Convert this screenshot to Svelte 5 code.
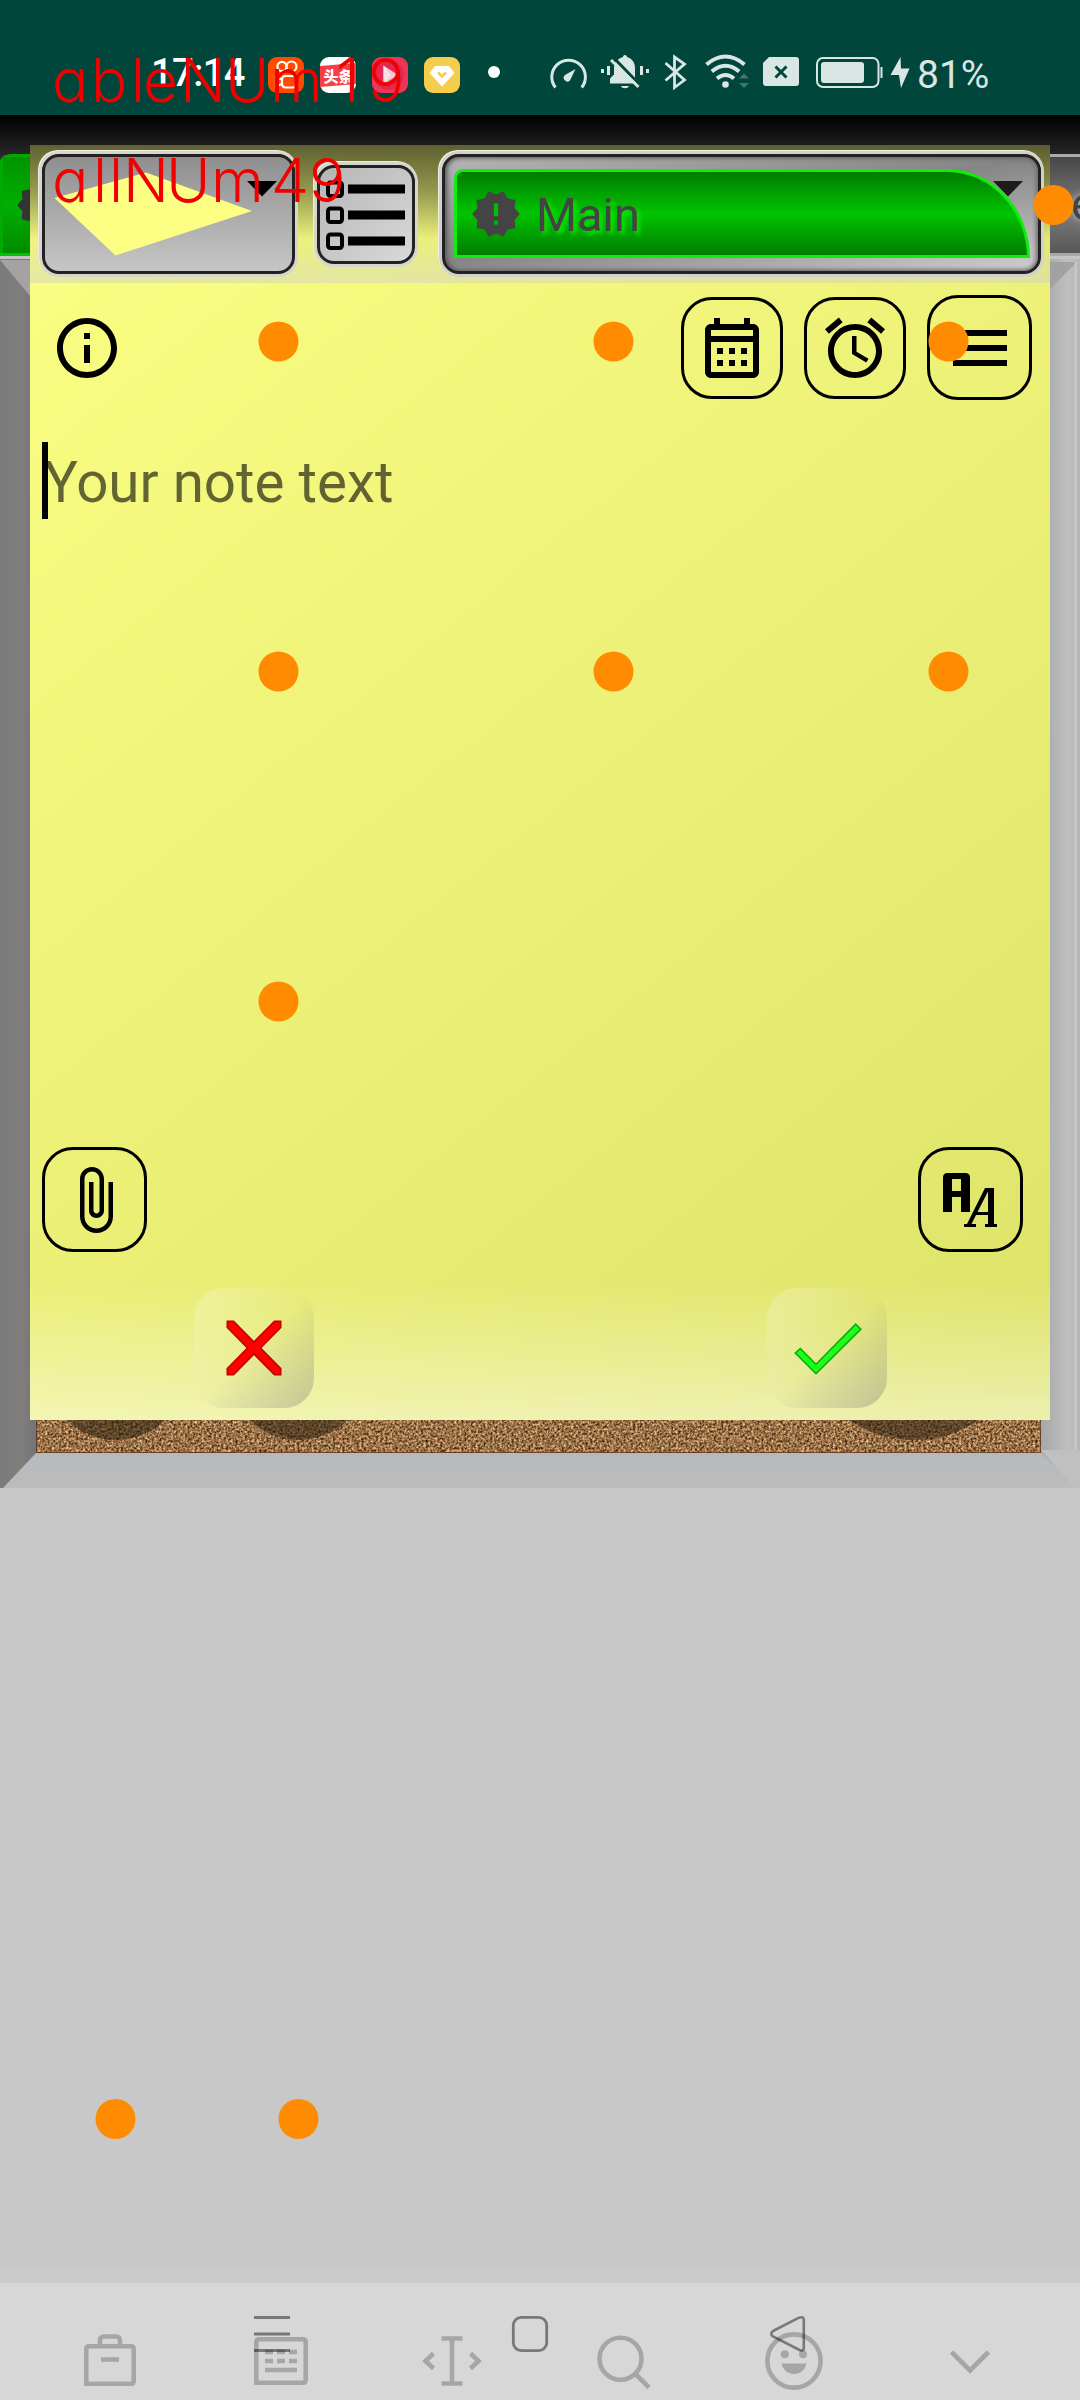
<script>
  const touches = [
    [1053.5, 205], [278.5, 341.5], [613.5, 341.5], [948.5, 341.5],
    [278.5, 671.5], [613.5, 671.5], [948.5, 671.5], [278.5, 1001.5],
    [115.5, 2119], [298.5, 2119]
  ];
  const listRows = [16.5, 42.5, 68.5];
  const badge =
    'M23 12l-2.44-2.78.34-3.68-3.61-.82-1.89-3.18L12 3 8.6 1.54 6.71 4.72l-3.61.81.34 3.68L1 12l2.44 2.78-.34 3.69 3.61.82 1.89 3.18L12 21l3.4 1.46 1.89-3.18 3.61-.82-.34-3.68L23 12zm-10 5h-2v-2h2v2zm0-4h-2V7h2v6z';
</script>

<div class="screen">
  <header class="status">
    <span class="clock">17:14</span>
    <div class="apps">
      <svg width="36" height="36" viewBox="0 0 36 36">
        <rect width="36" height="36" rx="9" fill="#ff4a00" />
        <g fill="none" stroke="#fff" stroke-width="2.2">
          <circle cx="14" cy="9.500" r="4.600" /><circle cx="23.5" cy="9.500" r="5" />
          <rect x="14" y="19" width="14.500" height="11.5" rx="3.5" />
          <path d="M14 22.500L8 20V29L14 27" />
        </g>
      </svg>
      <svg width="36" height="36" viewBox="0 0 36 36">
        <rect width="36" height="36" rx="9" fill="#fff" />
        <path d="M0 9L36 6V27L0 30Z" fill="#f83d44" />
        <text class="cjk" x="3.500" y="24.500" fill="#fff">头条</text>
      </svg>
      <svg width="36" height="36" viewBox="0 0 36 36">
        <rect width="36" height="36" rx="9" fill="#ee3558" />
        <circle cx="17" cy="18" r="15" fill="#dc1f49" opacity=".6" />
        <path d="M11.5 8.5L26 18 11.5 27.5Z" fill="#f9c3cc" />
        <path d="M11.5 8.5L19 18 11.5 27.5Z" fill="#f6e2e4" />
      </svg>
      <svg width="36" height="36" viewBox="0 0 36 36">
        <rect width="36" height="36" rx="9" fill="#f5cd4d" />
        <path d="M11 9.500H25L30 16 18 29 6 16Z" fill="#fff" stroke="#fff" stroke-width="1" stroke-linejoin="round" />
        <path d="M14 15.500L18 19.500 22 15.500" fill="none" stroke="#f5cd4d" stroke-width="2.600" />
      </svg>
    </div>
    <span class="more"></span>
    <svg class="signals" width="362" height="40" viewBox="548 53 362 40" fill="#d9e6e4">
      <g fill="none" stroke="#d9e6e4" stroke-width="3">
        <path d="M555.500 87.500A16.800 16.800 0 1 1 581.700 87.500" />
      </g>
      <path d="M575.500 69L570 80.500A3.500 3.500 0 1 1 565 75Z" />
      <path d="M625 55c1.500 0 2 1 2 2 5 1.500 8 5.500 8 11v10l5 5.500H610v-5l4-4V68c0-5.500 4-9.500 9-11 0-1 .5-2 2-2zM621 86h8c-1 3-7 3-8 0z" />
      <path d="M612 56L642 87" stroke="#00463a" stroke-width="3" />
      <path d="M611 60L638.500 87" stroke="#d9e6e4" stroke-width="3" />
      <path d="M601 69h3v4h-3zM607 66h3v9h-3zM640 66h3v9h-3zM646 69h3v4h-3z" />
      <path d="M665.500 63L684.500 80 674.500 87.500V57L684.500 64 665.500 80.500" fill="none" stroke="#d9e6e4" stroke-width="2.800" />
      <g fill="none" stroke="#d9e6e4" stroke-width="4">
        <path d="M706.500 64.500Q725.500 48.500 744.500 64.500" />
        <path d="M711.800 71.500Q725.500 60 739.200 71.500" />
        <path d="M717 78.500Q725.500 71.500 734 78.500" />
      </g>
      <circle cx="725.500" cy="84.500" r="3.300" />
      <path d="M744 73.500l5 5h-10zM744 88l-5-5h10z" opacity=".3" />
      <path d="M769 57h27q3 0 3 3v23q0 3-3 3h-30q-3 0-3-3V63z" />
      <path d="M775.500 66.500l11 11M786.500 66.500l-11 11" stroke="#00463a" stroke-width="3" />
      <rect x="817" y="58" width="61.500" height="29" rx="6" fill="none" stroke="#d9e6e4" stroke-width="2" />
      <rect x="821" y="62" width="43" height="21" rx="3" />
      <path d="M880.500 67h2v11h-2z" />
      <path d="M900.500 57L890.500 75H899L901 88 909.500 68.500H901Z" />
    </svg>
    <span class="percent">81%</span>
  </header>

  <main class="board">
    <svg class="backdrop" width="1080" height="1373" viewBox="0 115 1080 1373">
      <defs>
        <linearGradient id="strip" x2="0" y2="1">
          <stop offset="0" stop-color="#000" /><stop offset=".3" stop-color="#292929" /><stop offset="1" stop-color="#666" />
        </linearGradient>
        <linearGradient id="tab" x2="0" y2="1">
          <stop offset="0" stop-color="#009400" /><stop offset=".5" stop-color="#00ae00" /><stop offset="1" stop-color="#008a00" />
        </linearGradient>
        <linearGradient id="grayTab" x2="0" y2="1">
          <stop offset="0" stop-color="#474747" /><stop offset=".55" stop-color="#7c7c7c" /><stop offset="1" stop-color="#585858" />
        </linearGradient>
        <linearGradient id="railL"><stop offset="0" stop-color="#7b7b7b" /><stop offset=".6" stop-color="#807e7d" /><stop offset="1" stop-color="#737478" /></linearGradient>
        <linearGradient id="railR"><stop offset="0" stop-color="#a6a7a8" /><stop offset=".7" stop-color="#bfbfc0" /><stop offset="1" stop-color="#b6b6b6" /></linearGradient>
        <linearGradient id="railB" x2="0" y2="1"><stop offset="0" stop-color="#bab8b8" /><stop offset=".25" stop-color="#b7bcc2" /><stop offset=".5" stop-color="#bababa" /><stop offset="1" stop-color="#bcbcbc" /></linearGradient>
        <filter id="grain" x="0" y="0" width="1" height="1" color-interpolation-filters="sRGB">
          <feTurbulence type="fractalNoise" baseFrequency=".42" numOctaves="3" seed="4" />
          <feColorMatrix values="1.200 0 0 0 0  1.050 0 0 0 -.08  .85 0 0 0 -.14  0 0 0 0 1" />
        </filter>
        <clipPath id="corkClip"><rect x="36" y="1400" width="1005" height="53" /></clipPath>
      </defs>
      <rect y="115" width="1080" height="141" fill="url(#strip)" />
      <path d="M-2 256V170Q-2 154 12 154H40V256Z" fill="#0a0" />
      <rect x="3" y="157" width="40" height="97" fill="url(#tab)" />
      <rect y="253" width="40" height="3" fill="#00c400" />
      <path d={badge} fill="#333" transform="translate(15 179) scale(2.180)" />
      <rect x="1040" y="154" width="40" height="102" fill="#a9a9a9" />
      <rect x="1040" y="157" width="40" height="96" fill="url(#grayTab)" />
      <text class="tabText" x="1071" y="220">e</text>
      <rect y="256" width="1080" height="1232" fill="#b9b9b9" />
      <rect y="256" width="36" height="1232" fill="url(#railL)" />
      <path d="M0 260H36V303Z" fill="#a4a3a2" />
      <rect x="1041" y="256" width="39" height="1232" fill="url(#railR)" />
      <path d="M1041 262H1077L1041 298Z" fill="#a2a2a2" />
      <rect y="256" width="1080" height="3" fill="#c4c4c4" />
      <rect x="1074.500" y="262" width="2.500" height="1223" fill="#c8c8c8" />
      <path d="M36 1453H1041L1075 1488H3Z" fill="url(#railB)" />
      <path d="M1041 1450H1080V1488H1075Z" fill="#c0c0c0" />
      <rect x="36" y="1400" width="1005" height="53" fill="#986b45" />
      <rect x="36" y="1400" width="1005" height="53" filter="url(#grain)" />
      <g clip-path="url(#corkClip)" fill="#2b2110" opacity=".55">
        <circle cx="116" cy="1370" r="70" /><circle cx="299" cy="1370" r="70" /><circle cx="914" cy="1324" r="116" />
      </g>
      <path d="M36.500 1400V1452.500H1040.500V1400" fill="none" stroke="#55341b" opacity=".7" />
    </svg>

    <section class="note">
      <div class="toolbar">
        <div class="frame color">
          <svg width="247" height="114" viewBox="45 157 247 114">
            <path d="M54.500 198L146 172.500 252 211 115.500 255.500Z" fill="#fcff84" />
            <path d="M247 181h30l-15 15.500z" />
          </svg>
        </div>
        <div class="frame list">
          <svg width="92" height="93" viewBox="0 0 92 93">
            {#each listRows as y}
              <rect x="8" y={y - 2} width="14" height="13.500" rx="2.500" fill="none" stroke="#000" stroke-width="4" />
              <rect x="28" {y} width="57" height="9" />
            {/each}
          </svg>
        </div>
        <div class="frame folder">
          <svg class="caret" width="30" height="16" viewBox="0 0 30 16"><path d="M0 0h30L15 15.500z" fill="#1c1c1c" /></svg>
          <div class="tab">
            <svg width="52" height="52" viewBox="0 0 24 24" fill="#444"><path d={badge} /></svg>
            <span>Main</span>
          </div>
        </div>
      </div>

      <div class="actions">
        <svg class="info" width="72" height="72" viewBox="0 0 24 24"><path d="M11 7h2v2h-2zm0 4h2v6h-2zm1-9C6.480 2 2 6.480 2 12s4.480 10 10 10 10-4.480 10-10S17.520 2 12 2zm0 18c-4.410 0-8-3.590-8-8s3.590-8 8-8 8 3.590 8 8-3.590 8-8 8z" /></svg>
        <div class="key">
          <svg width="72" height="72" viewBox="0 0 24 24"><path d="M19 4h-1V2h-2v2H8V2H6v2H5c-1.110 0-1.990.9-1.990 2L3 20c0 1.100.89 2 2 2h14c1.100 0 2-.9 2-2V6c0-1.100-.9-2-2-2zm0 16H5V10h14v10zm0-12H5V6h14v2zM9 14H7v-2h2v2zm4 0h-2v-2h2v2zm4 0h-2v-2h2v2zm-8 4H7v-2h2v2zm4 0h-2v-2h2v2zm4 0h-2v-2h2v2z" /></svg>
        </div>
        <div class="key">
          <svg width="72" height="72" viewBox="0 0 24 24"><path d="M22 5.720l-4.600-3.860-1.290 1.530 4.600 3.860L22 5.720zM7.880 3.390L6.600 1.860 2 5.710l1.290 1.530 4.590-3.850zM12.500 8H11v6l4.750 2.850.75-1.230-4-2.370V8zM12 4c-4.970 0-9 4.030-9 9s4.020 9 9 9c4.970 0 9-4.030 9-9s-4.030-9-9-9zm0 16c-3.870 0-7-3.130-7-7s3.130-7 7-7 7 3.130 7 7-3.130 7-7 7z" /></svg>
        </div>
        <div class="key big">
          <svg width="72" height="72" viewBox="0 0 24 24"><path d="M3 6h18v2H3zM3 11h18v2H3zM3 16h18v2H3z" /></svg>
        </div>
      </div>

      <div class="editor"><i></i><span>Your note text</span></div>

      <div class="extras">
        <div class="key big">
          <svg width="72" height="72" viewBox="0 0 24 24"><path d="M16.500 6v11.500c0 2.210-1.790 4-4 4s-4-1.790-4-4V5c0-1.380 1.120-2.500 2.500-2.500s2.500 1.120 2.500 2.500v10.500c0 .55-.45 1-1 1s-1-.45-1-1V6H10v9.500c0 1.380 1.120 2.500 2.500 2.500s2.500-1.120 2.500-2.500V5c0-2.210-1.790-4-4-4S7 2.790 7 5v12.500c0 3.040 2.460 5.500 5.500 5.500s5.500-2.460 5.500-5.500V6h-1.500z" /></svg>
        </div>
        <div class="key big">
          <svg class="style" width="54" height="54" viewBox="0 0 18 18"><path d="M1.500 0H7.500Q9 0 9 1.500V13H6V8H3V13H0V1.500Q0 0 1.500 0ZM3 2V6H6V2ZM14 5H17V17H18V18H14V17H15V14H11L9.500 17H11V18H7V17H8ZM15 6.200L11.500 13H15Z" fill-rule="evenodd" /></svg>
        </div>
      </div>

      <div class="confirm">
        <div class="soft">
          <svg width="120" height="120" viewBox="194 1288 120 120"><path d="M227.300 1321.300H233.500L254 1342 274.500 1321.300H280.700V1327.500L260.500 1348 280.700 1368.500V1374.700H274.500L254 1354 233.500 1374.700H227.300V1368.500L247.500 1348 227.300 1327.500Z" fill="#f00" stroke="#c00000" stroke-width="1.600" /></svg>
        </div>
        <div class="soft">
          <svg width="120" height="120" viewBox="767 1288 120 120"><path d="M795.300 1353L800.300 1348.500 816 1364.200 855.700 1324.200 860.800 1329.300 816 1373.700Z" fill="#1bff1b" stroke="#0bab0b" stroke-width="1.600" /></svg>
        </div>
      </div>
    </section>
  </main>

  <div class="space"></div>
  <div class="edge"></div>
  <footer class="keyboard">
    <svg width="1080" height="117" viewBox="0 2283 1080 117" fill="none" stroke="#a5a7a5" stroke-width="4.600">
      <path d="M86.300 2383.700V2349Q86.300 2346.300 89 2346.300H131Q133.700 2346.300 133.700 2349V2381Q133.700 2383.700 131 2383.700ZM100 2346V2341Q100 2336.500 104 2336.500H116Q120 2336.500 120 2341V2346M101 2359.500H119" />
      <path d="M256.300 2382.700V2342Q256.300 2339.300 259 2339.300H303Q305.700 2339.300 305.700 2342V2380Q305.700 2382.700 303 2382.700ZM265 2352H273M277 2352H285M289 2352H297M265 2361H273M277 2361H285M289 2361H297M265 2370H297" />
      <path d="M441.500 2338.500H462.500M441.500 2383.500H462.500M452 2338V2384M433.500 2353.500L425.500 2361 433.500 2368.500M470.500 2353.500L478.500 2361 470.500 2368.500" />
      <circle cx="620.500" cy="2358.700" r="21" /><path d="M635 2373.500L649 2387.500" />
      <circle cx="794" cy="2361" r="26.600" />
      <g fill="#a5a7a5" stroke="none"><circle cx="784.800" cy="2354.300" r="4" /><circle cx="803" cy="2354.300" r="4" /><path d="M781.500 2363.500H806.500C805 2370 800 2374 794 2374S783 2370 781.500 2363.500Z" /></g>
      <path d="M951.500 2352L970 2370.500 988.500 2352" />
    </svg>
    <svg class="nav" width="1080" height="117" viewBox="0 2283 1080 117" fill="none" stroke="#000" stroke-opacity=".44" stroke-width="2.800">
      <path d="M254 2317.500H290M254 2334H290M254 2350.500H290" />
      <rect x="513.300" y="2317.300" width="33.400" height="33.400" rx="8" />
      <path d="M773 2331L799 2317.700Q803.800 2316 803.800 2320V2348Q803.800 2351.500 799.500 2350L773 2336.500Q769.500 2334 773 2331Z" stroke-width="2.600" />
    </svg>
  </footer>

  <svg class="overlay" width="1080" height="2400" viewBox="0 0 1080 2400">
    {#each touches as [x, y]}
      <circle cx={x} cy={y} r="20" fill="#ff8c00" />
    {/each}
    <text class="trace" x="52 91 131 143 180 225 270 336 368" y="102">ableNUm19</text>
    <text class="trace" x="52 93 109 123 166 211 271 309" y="202">allNUm49</text>
  </svg>
</div>

<style>
  :global(body) { margin: 0; background: #c8c8c8; }
  .screen { position: relative; width: 1080px; height: 2400px; overflow: hidden; display: flex; flex-direction: column; font-family: Roboto, "Liberation Sans", sans-serif; }
  svg { display: block; flex: none; }
  .status { height: 115px; box-sizing: border-box; padding: 53px 0 0 151px; background: #00463a; display: flex; align-items: flex-start; color: #fff; }
  .clock { width: 117px; font-size: 38px; line-height: 40px; font-weight: 500; letter-spacing: -0.5px; }
  .apps { display: flex; gap: 16px; padding-top: 4px; }
  .cjk { font: 900 15px "Noto Sans CJK SC", sans-serif; }
  .more { width: 12px; height: 12px; border-radius: 50%; background: #fff; margin: 13px 48px 0 28px; }
  .percent { color: #d9e6e4; font-size: 39px; line-height: 44px; margin-left: 7px; }
  .board { position: relative; height: 1373px; }
  .tabText { font-size: 47px; fill: #444; filter: drop-shadow(0 0 4px #ccc); }
  .note { position: absolute; left: 30px; top: 30px; width: 1020px; height: 1275px; display: flex; flex-direction: column; background: linear-gradient(141deg, #fbff84 0%, #dde269 100%); }
  .toolbar { height: 138px; box-sizing: border-box; padding: 6px 6px 0 9px; display: flex; background: linear-gradient(rgba(0,0,0,.62), rgba(0,0,0,.38) 35%, rgba(120,120,80,.08) 68%, rgba(205,205,205,.45)); }
  .frame { box-sizing: border-box; border: 3px solid #222; border-radius: 17px; box-shadow: 0 0 0 3px #d6d6cd, -1px -1px 0 3px #eeeee4; background: linear-gradient(#8f8f8f, #c6c6c6); flex: none; }
  .color { width: 253px; height: 120px; margin: 3px 22px 0 3px; }
  .list { width: 98px; height: 99px; margin: 14px 27px 0 0; border-color: #222; background: linear-gradient(135deg, #b5b5b5, #d9d9d9); }
  .folder { position: relative; width: 599px; height: 120px; margin-top: 3px; padding: 12px 0 0 9px; background: linear-gradient(170deg, #b5b5b5, #858585 48%, #cfcfcf); box-shadow: 0 0 0 3px #d2d2cc, -1px -1px 0 3px #eeeee4, inset 2px 0 5px #555, inset -2px 0 5px #777; }
  .caret { position: absolute; right: 15px; top: 24px; }
  .tab { position: relative; width: 576px; height: 89px; box-sizing: border-box; border: 3px solid #10ec10; border-radius: 9px 83px 0 0 / 9px 89px 0 0; background: linear-gradient(#007d00, #00c400 50%, #007d00); display: flex; align-items: center; padding-left: 13px; color: #444; }
  .tab span { font-size: 47px; line-height: 56px; margin: 3px 0 0 14px; text-shadow: 3px 3px 4px #0e0; }
  .actions { height: 131px; display: flex; padding: 14px 18px 0 21px; box-sizing: border-box; align-items: flex-start; }
  .info { margin: 15px 558px 0 0; }
  .key { width: 102px; height: 102px; box-sizing: border-box; border: 3px solid #000; border-radius: 31px; display: flex; align-items: center; justify-content: center; flex: none; }
  .actions .key { margin-right: 21px; }
  .key.big { width: 105px; height: 105px; }
  .actions .key.big { margin: -2px 0 0; }
  .style { margin-right: 2px; }
  .editor { flex: 1; padding: 28px 0 0 12px; display: flex; align-items: flex-start; }
  .editor i { width: 6px; height: 77px; background: #000; margin-right: -6px; position: relative; }
  .editor span { font-size: 56.5px; line-height: 77px; color: rgba(0,0,0,.6); margin: 3px 0 0 2px; }
  .extras { display: flex; justify-content: space-between; padding: 0 27px 28px 12px; }
  .confirm { height: 140px; box-sizing: border-box; padding: 8px 163px 0 164px; display: flex; justify-content: space-between; background: linear-gradient(rgba(255,255,255,0), rgba(255,255,255,.45)); }
  .soft { width: 120px; height: 120px; border-radius: 30px; background: linear-gradient(135deg, rgba(255,255,255,.25), rgba(200,200,120,.05) 50%, rgba(110,110,110,.35)); }
  .space { height: 780px; background: #c8c8c8; }
  .edge { height: 15px; background: #ccc; }
  .keyboard { position: relative; height: 117px; background: #d7d7d7; }
  .nav { position: absolute; left: 0; top: 0; }
  .overlay { position: absolute; left: 0; top: 0; pointer-events: none; }
  .trace { font-family: Inter, "Liberation Sans", sans-serif; font-weight: 300; font-size: 60.5px; fill: #f00000; font-feature-settings: "cv11"; }
</style>
